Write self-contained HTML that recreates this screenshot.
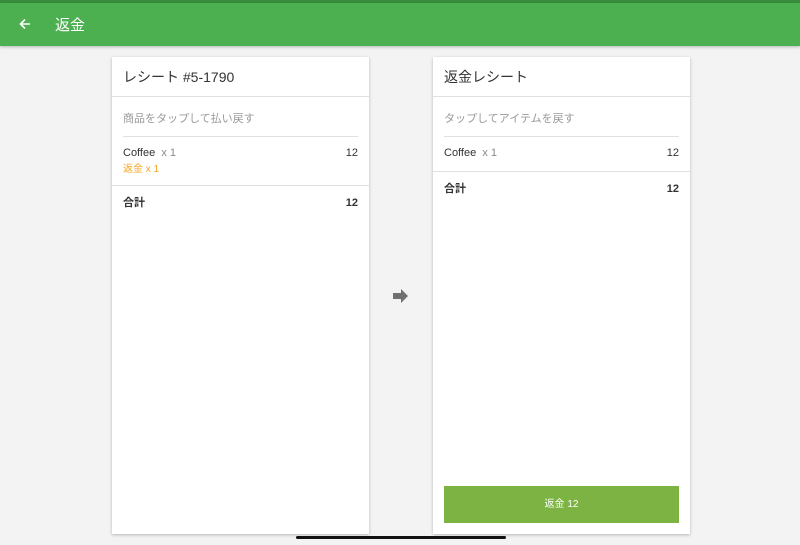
<!DOCTYPE html>
<html><head><meta charset="utf-8"><style>
*{margin:0;padding:0;box-sizing:border-box}
body{width:800px;height:545px;background:#f3f3f3;font-family:"Liberation Sans","Noto Sans CJK JP",sans-serif;position:relative;overflow:hidden;color:#333}
.top{position:absolute;left:0;top:0;width:800px;height:3px;background:#388e3c}
.bar{position:absolute;left:0;top:3px;width:800px;height:43px;background:#4caf50;box-shadow:0 1px 3px rgba(0,0,0,.25)}
.bar .t{position:absolute;left:55px;top:13px;color:#fff;font-size:15px;line-height:20px}
.card{position:absolute;top:57px;width:257px;height:477px;background:#fff;box-shadow:0 1px 3px rgba(0,0,0,.25)}
.ab{position:absolute;font-size:11px;white-space:nowrap;line-height:14px}
.h{position:absolute;left:11px;top:10px;font-size:14px;line-height:20px;color:#333}
.hl{position:absolute;left:0;right:0;height:1px;background:#e0e0e0}
.btn{position:absolute;left:11px;top:429px;width:235px;height:37px;background:#7cb342;color:#fff;font-size:10px;text-align:center;line-height:37px}
</style></head><body>
<div class="top"></div>
<div class="bar">
<svg style="position:absolute;left:19px;top:15px" width="12" height="12" viewBox="0 0 12 12"><path d="M11 6H2M6 1.5L1.5 6 6 10.5" stroke="#fff" stroke-width="1.6" fill="none"/></svg>
<div class="t">返金</div></div>
<div class="card" style="left:112px">
<div class="h">レシート #5-1790</div>
<div class="hl" style="top:39px"></div>
<div class="ab" style="left:11px;top:55px;color:#999">商品をタップして払い戻す</div>
<div class="hl" style="top:79px;left:11px;right:11px"></div>
<div class="ab" style="left:11px;top:89px">Coffee <span style="color:#888">&nbsp;x 1</span></div>
<div class="ab" style="right:11px;top:89px">12</div>
<div class="ab" style="left:11px;top:106px;color:#f5a623;font-size:10px">返金 x 1</div>
<div class="hl" style="top:128px"></div>
<div class="ab" style="left:11px;top:139px;font-weight:bold">合計</div>
<div class="ab" style="right:11px;top:139px;font-weight:bold">12</div>
</div>
<svg style="position:absolute;left:393px;top:289px" width="16" height="14" viewBox="0 0 16 14"><path d="M0 4H8V0L15 7 8 14V10H0Z" fill="#707070"/></svg>
<div class="card" style="left:433px">
<div class="h">返金レシート</div>
<div class="hl" style="top:39px"></div>
<div class="ab" style="left:11px;top:55px;color:#999">タップしてアイテムを戻す</div>
<div class="hl" style="top:79px;left:11px;right:11px"></div>
<div class="ab" style="left:11px;top:89px">Coffee <span style="color:#888">&nbsp;x 1</span></div>
<div class="ab" style="right:11px;top:89px">12</div>
<div class="hl" style="top:114px"></div>
<div class="ab" style="left:11px;top:125px;font-weight:bold">合計</div>
<div class="ab" style="right:11px;top:125px;font-weight:bold">12</div>
<div class="btn">返金 12</div>
</div>
<div style="position:absolute;left:296px;top:536px;width:210px;height:3px;background:#111;border-radius:2px"></div>
</body></html>
